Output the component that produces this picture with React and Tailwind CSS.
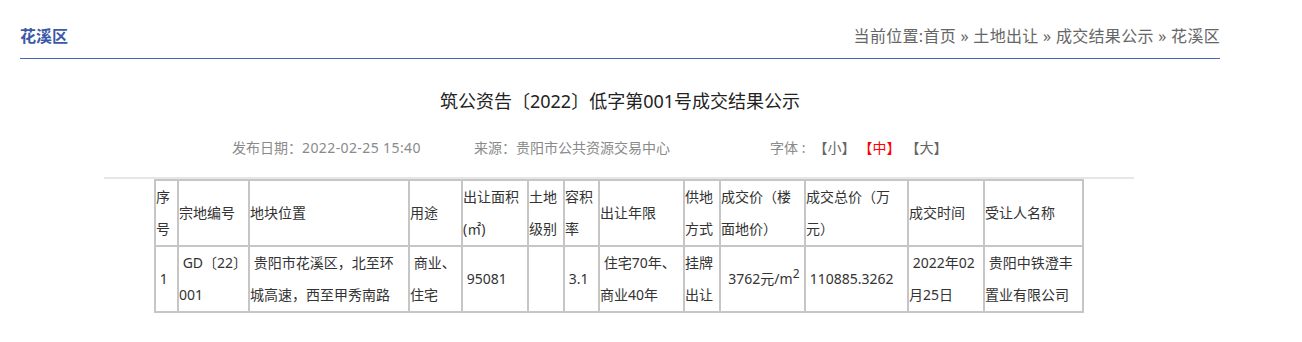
import React from "react";

const cols = [23, 71, 160, 53, 66, 36, 35, 85, 36, 85, 103, 76, 99];

const headers = [
  ["序", "号"],
  ["宗地编号"],
  ["地块位置"],
  ["用途"],
  ["出让面积", "(㎡)"],
  ["土地", "级别"],
  ["容积", "率"],
  ["出让年限"],
  ["供地", "方式"],
  ["成交价（楼", "面地价）"],
  ["成交总价（万", "元）"],
  ["成交时间"],
  ["受让人名称"],
];

const S = "\u00a0";

const data = [
  [S + "1"],
  [S + "GD〔22〕", "001"],
  [S + "贵阳市花溪区，北至环", "城高速，西至甲秀南路"],
  [S + "商业、", "住宅"],
  [S + "95081"],
  [""],
  [S + "3.1"],
  [S + "住宅70年、", "商业40年"],
  ["挂牌", "出让"],
  null,
  [S + "110885.3262"],
  [S + "2022年02", "月25日"],
  [S + "贵阳中铁澄丰", "置业有限公司"],
];

function Lines({ lines }) {
  return lines.map((l, i) => (
    <React.Fragment key={i}>
      {i > 0 && <br />}
      {l}
    </React.Fragment>
  ));
}

export default function App() {
  return (
    <div className="bg-white min-h-[342px] font-['Noto_Sans','Noto_Sans_CJK_SC',sans-serif]">
      <div className="ml-[20px] w-[1200px]">
        <div className="flex justify-between items-center pt-[24px] pb-[10px] border-b border-[#4866b3] leading-[24px] text-[16px]">
          <span className="font-bold text-[#3b59a8]">花溪区</span>
          <span className="text-[#666666] tracking-[0.3px]">当前位置:首页 » 土地出让 » 成交结果公示 » 花溪区</span>
        </div>

        <div className="mt-[28px] text-center text-[18px] leading-[28px] text-[#222222]">
          筑公资告〔2022〕低字第001号成交结果公示
        </div>

        <div className="ml-[84px] w-[1030px]">
          <div className="mt-[23px] flex pl-[128px] text-[14px] leading-[20px] text-[#8a8a8a]">
            <span className="w-[242px]">
              发布日期：<span className="tracking-[0.4px]">2022-02-25 15:40</span>
            </span>
            <span className="w-[296px]">来源：贵阳市公共资源交易中心</span>
            <span className="flex">
              <span>字体 : </span>
              <span className="ml-[8px] text-[#666666]">【小】</span>
              <span className="ml-[3px] text-[#ff0000]">【中】</span>
              <span className="ml-[5px] text-[#666666]">【大】</span>
            </span>
          </div>

          <div className="mt-[19px] border-t-2 border-[#e6e6e6]">
            <table className="mx-auto table-fixed border-collapse border-2 border-[#c6c6c6] text-[14px] leading-[32px] text-[#333333]">
              <colgroup>
                {cols.map((w, i) => (
                  <col key={i} style={{ width: w }} />
                ))}
              </colgroup>
              <tbody>
                <tr>
                  {headers.map((h, i) => (
                    <td key={i} className="border-2 border-[#c6c6c6] p-0 align-middle whitespace-nowrap">
                      <Lines lines={h} />
                    </td>
                  ))}
                </tr>
                <tr>
                  {data.map((d, i) => (
                    <td key={i} className="border-2 border-[#c6c6c6] p-0 align-middle whitespace-nowrap">
                      {d ? (
                        <Lines lines={d} />
                      ) : (
                        <span>
                          {S}
                          {S}3762元/m<sup className="text-[12px]">2</sup>
                        </span>
                      )}
                    </td>
                  ))}
                </tr>
              </tbody>
            </table>
          </div>
        </div>
      </div>
    </div>
  );
}
